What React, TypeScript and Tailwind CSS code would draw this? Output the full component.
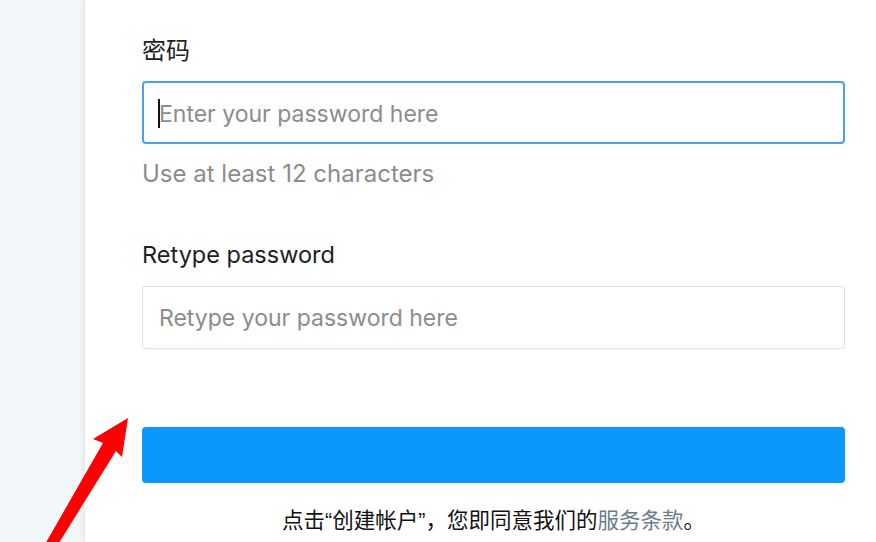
import React from 'react';

const font = "font-['Inter','Noto_Sans_CJK_SC',sans-serif]";
const cjk = "font-['Liberation_Sans','Noto_Sans_CJK_SC',sans-serif]";

const Arrow: React.FC = () => (
  <svg className="pointer-events-none absolute left-0 top-0" width="876" height="542" viewBox="0 0 876 542">
    <polygon points="128,418 93,439 103,443 44,546 57,546 116,451 122,457" fill="#ff0000" />
  </svg>
);

const App: React.FC = () => {
  return (
    <div className={`relative flex h-[542px] w-[876px] overflow-hidden ${font}`}>
      <div className="w-[85px] shrink-0 bg-[#f2f7f9]" />
      <main className="flex flex-1 flex-col bg-white pl-[57px] pr-[31px] pt-[36px] shadow-[-2px_0_5px_rgba(0,0,0,0.07)]">
        <label className={`text-[24px] leading-[30px] text-[#222] ${cjk}`}>密码</label>
        <div className="relative mt-[15px]">
          <input
            type="password"
            placeholder="Enter your password here"
            className="h-[63px] w-full rounded-[4px] border-2 border-[#4d9ff2] px-[15px] pt-[3px] text-[23px] text-[#222] outline-none placeholder:text-[#8c8c8c]"
          />
          <span className="absolute left-[16px] top-[18px] h-[29px] w-[2px] bg-[#111]" />
        </div>
        <p className="mt-[15px] text-[24px] leading-[30px] text-[#8c8c8c]">Use at least 12 characters</p>

        <label className="mt-[51px] text-[23.5px] leading-[30px] text-[#1e1e1e]">Retype password</label>
        <input
          type="password"
          placeholder="Retype your password here"
          className="mt-[16px] h-[63px] w-full rounded-[3px] border border-[#dbe2e8] px-[16px] pt-[1px] text-[23px] text-[#222] outline-none placeholder:text-[#8c8c8c]"
        />

        <button className="mt-[78px] h-[56px] w-full rounded-[4px] bg-[#0a98ff]" />

        <p className={`mt-[23px] text-center text-[21.5px] leading-[30px] text-[#111] ${cjk}`}>
          点击“创建帐户”，您即同意我们的<span className="text-[#6b7b8c]">服务条款</span>。
        </p>
      </main>
      <Arrow />
    </div>
  );
};

export default App;
